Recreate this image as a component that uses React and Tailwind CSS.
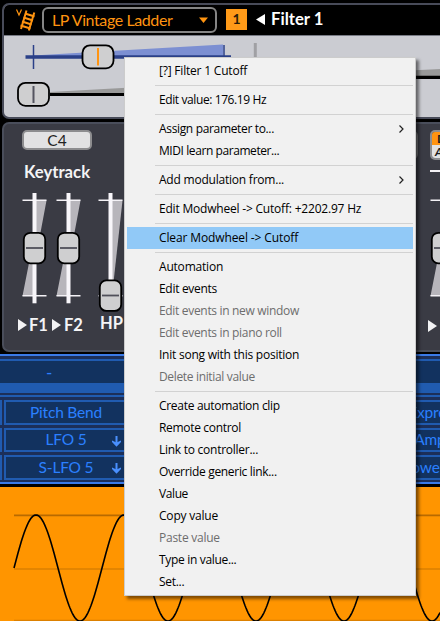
import React from "react";

const MENU = [
  [{ label: "[?] Filter 1 Cutoff", track: "tracking-[-0.2px]" }],
  [{ label: "Edit value: 176.19 Hz", track: "tracking-[-0.4px]" }],
  [
    { label: "Assign parameter to...", kind: "sub", track: "tracking-[-0.34px]" },
    { label: "MIDI learn parameter...", track: "tracking-[-0.42px]" },
  ],
  [{ label: "Add modulation from...", kind: "sub", track: "tracking-[-0.22px]" }],
  [{ label: "Edit Modwheel -> Cutoff: +2202.97 Hz", track: "tracking-[-0.2px]" }],
  [{ label: "Clear Modwheel -> Cutoff", kind: "active", track: "tracking-[-0.12px]" }],
  [
    { label: "Automation", track: "tracking-[-0.2px]" },
    { label: "Edit events", track: "tracking-[-0.3px]" },
    { label: "Edit events in new window", kind: "off", track: "tracking-[-0.32px]" },
    { label: "Edit events in piano roll", kind: "off", track: "tracking-[-0.32px]" },
    { label: "Init song with this position", track: "tracking-[-0.24px]" },
    { label: "Delete initial value", kind: "off", track: "tracking-[-0.34px]" },
  ],
  [
    { label: "Create automation clip", track: "tracking-[-0.3px]" },
    { label: "Remote control", track: "tracking-[-0.32px]" },
    { label: "Link to controller...", track: "tracking-[-0.26px]" },
    { label: "Override generic link...", track: "tracking-[-0.32px]" },
    { label: "Value", track: "tracking-[-0.4px]" },
    { label: "Copy value", track: "tracking-[-0.2px]" },
    { label: "Paste value", kind: "off", track: "tracking-[-0.25px]" },
    { label: "Type in value...", track: "tracking-[-0.32px]" },
    { label: "Set...", track: "tracking-[-0.3px]" },
  ],
];

function MenuItem({ label, kind, track }) {
  return (
    <div
      className={
        "flex h-[22px] items-center justify-between pl-8 pr-[8px] " +
        (kind === "active" ? "bg-[#91c9f7] " : "") +
        (kind === "off" ? "text-[#6d6d6d]" : "text-black")
      }
    >
      <span className={"whitespace-pre " + track}>{label}</span>
      {kind === "sub" && (
        <svg width="7" height="8" viewBox="0 0 7 8">
          <path d="M1.5 0.5L5 4L1.5 7.5" fill="none" stroke="#222" strokeWidth="1.2" />
        </svg>
      )}
    </div>
  );
}

function ContextMenu() {
  return (
    <div className="absolute left-[124px] top-[57px] h-[539px] w-[292px] border border-[#ccc] bg-[#f1f1f1] p-[2px] font-['Open_Sans','Noto_Sans',sans-serif] text-[12px] shadow-[3px_3px_3px_rgba(0,0,0,0.5)]">
      {MENU.map((group, g) => (
        <React.Fragment key={g}>
          {g > 0 && (
            <div className="flex h-[7px] items-center pl-7">
              <div className="h-px w-full bg-[#d2d2d2]" />
            </div>
          )}
          {group.map((item) => (
            <MenuItem key={item.label} {...item} />
          ))}
        </React.Fragment>
      ))}
    </div>
  );
}

function Header() {
  return (
    <div className="flex h-[30px] shrink-0 items-center bg-black">
      <svg width="22" height="26" viewBox="14 5 22 26" className="ml-[10px]" fill="none" stroke="#ff9410">
        <path d="M16.5 7.5L19 13L21.5 7.5" strokeWidth="1.2" />
        <path d="M26.500 8.5L21 27M34.300 10.5L28.800 28.500" strokeWidth="2" />
        <path d="M25 11.500L34.500 14.500M23.500 15.500L33 18.500M22 19.500L31.500 22.500M20.500 23.500L30.500 26.500" strokeWidth="2" />
      </svg>
      <div className="ml-[6px] flex h-[26px] w-[175px] items-center justify-between rounded-[6px] border-2 border-[#858585] pl-[8px] pr-[7px] text-[#ff9410]">
        <span className="whitespace-nowrap text-[16px] leading-none tracking-[-0.4px]">LP Vintage Ladder</span>
        <svg width="9" height="6" viewBox="0 0 9 6">
          <path d="M0 0.500H9L4.500 6Z" fill="#ff9410" />
        </svg>
      </div>
      <div className="mb-[2px] ml-[9px] flex h-[21px] w-[21px] items-center justify-center bg-[#ff9a18] text-[14px] font-bold leading-none text-[#2a1c08]">1</div>
      <svg width="9" height="11" viewBox="0 0 9 11" className="mb-[1px] ml-[9px]">
        <path d="M9 0V11L0 5.500Z" fill="#fff" />
      </svg>
      <span className="mb-[2px] ml-[6px] text-[16.7px] font-bold leading-none text-white">Filter 1</span>
    </div>
  );
}

function FilterSliders() {
  return (
    <svg width="436" height="81" viewBox="4 36 436 81" className="block shrink-0">
      <path d="M33 55.500L223 44.500V57H33Z" fill="#7c8fd2" />
      <path d="M25.500 57H231" stroke="#2b4088" strokeWidth="3.500" />
      <path d="M33.500 45V69M224 45V57" stroke="#2b4088" strokeWidth="1.500" />
      <path d="M255.300 43V60" stroke="#a0a0a4" strokeWidth="3" />
      <rect x="82.500" y="45.300" width="31" height="23" rx="7.500" fill="#cfcfd0" stroke="#000" strokeWidth="1.800" />
      <path d="M98 48V65.500" stroke="#ff9410" strokeWidth="2" />
      <path d="M50 92L230 82V94H50Z" fill="#999" />
      <path d="M50 94.500H231" stroke="#000" strokeWidth="3.200" />
      <rect x="18" y="82.800" width="31" height="23" rx="7.500" fill="#cfcfd0" stroke="#000" strokeWidth="1.800" />
      <path d="M33.500 86V103" stroke="#555560" strokeWidth="2" />
      <path d="M300 76L440 69V77H300Z" fill="#999" />
      <path d="M300 77.300H440" stroke="#000" strokeWidth="3.200" />
    </svg>
  );
}

function Fader({ low = false }) {
  const y = low ? 87.4 : 39.8;
  return (
    <svg width="25" height="120" viewBox="0 0 25 120" className="block shrink-0">
      {low ? (
        <path d="M13 7.500H24.500L14 103H12.500Z" fill="#b7b5bb" />
      ) : (
        <path d="M12.500 7.500H24.500L13 69V103H0.500L12.500 42Z" fill="#b7b5bb" />
      )}
      <path d="M0.500 7.300H24.500M0.500 102.700H24.500" stroke="#f4f2f6" strokeWidth="1.600" />
      <path d="M12.500 0V110.300" stroke="#f8f6fa" strokeWidth="4" />
      <rect x="1.800" y={y} width="21.400" height="30.500" rx="6.500" fill="#cfcfd0" stroke="#000" strokeWidth="1.800" />
      <path d={low ? "M4 102.500H21" : "M4 55H21"} stroke="#50505a" strokeWidth="1.800" />
    </svg>
  );
}

function Play() {
  return (
    <svg width="9" height="12" viewBox="0 0 9 12">
      <path d="M0 0L9 6L0 12Z" fill="#f2f2f4" />
    </svg>
  );
}

function Keytrack() {
  return (
    <div className="flex h-[230px] w-[470px] shrink-0 justify-between rounded-[7px] border-2 border-[#4a4e5b] bg-[#3a3b44]">
      <div className="flex flex-col font-bold text-[#f4f4f6]">
        <div className="ml-[18px] mt-[6px] flex h-[20px] w-[70px] items-center justify-center rounded-[5px] border-2 border-[#8d8d8f] bg-[#e2e2e3] pt-px text-[15.5px] font-normal leading-none text-[#222]">C4</div>
        <div className="ml-[20px] mt-[12px] h-[20px] text-[16.700px] leading-[20px]">Keytrack</div>
        <div className="ml-[17.5px] mt-[11px] flex">
          <Fader />
          <div className="ml-[9px]"><Fader /></div>
          <div className="ml-[17.5px]"><Fader low /></div>
        </div>
        <div className="ml-[14px] flex h-[24px] items-center text-[16.500px] leading-none">
          <Play />
          <span className="ml-[2px] w-[23px]">F1</span>
          <Play />
          <span className="ml-[3px] w-[22px]">F2</span>
          <span className="mb-[4px] ml-[14px]">HP</span>
        </div>
      </div>
      <div className="flex">
        <div className="mr-[12px] mt-[6px] h-[30px] w-[80px] rounded-[6px] border-2 border-[#77777b] bg-[#4a4b53]" />
        <div className="mr-[14px] flex w-[26px] flex-col">
          <div className="mt-[6px] flex h-[30px] flex-col overflow-hidden rounded-[5px] border-2 border-[#8d8d8f] text-[12px] font-bold leading-[13px] text-[#1b1b1b]">
            <span className="h-[13px] bg-[#ff9410] pl-[5px]">D</span>
            <span className="h-[13px] bg-[#e2e2e3] pl-[3px] italic">A</span>
          </div>
          <div className="mt-[10px] h-[2px] shrink-0 bg-[#f4f2f6]" />
          <div className="mt-[21px]"><Fader /></div>
          <div className="-ml-[2px] mt-[7px]"><Play /></div>
        </div>
      </div>
    </div>
  );
}

function ModCell({ label, arrow = false }) {
  return (
    <div className="relative flex h-full w-[124px] shrink-0 items-center justify-center border-2 border-[#205bb0] bg-[#12325f]">
      <span className="whitespace-nowrap text-[15.500px] leading-none tracking-[-0.2px]">{label}</span>
      {arrow && (
        <svg width="9" height="11" viewBox="0 0 9 11" className="absolute right-[5px] top-[6px]">
          <path d="M4.500 0V8" fill="none" stroke="#4a90ff" strokeWidth="2" />
          <path d="M0 4.600L4.500 6.500L9 4.600V6L4.500 10.800L0 6Z" fill="#4a90ff" />
        </svg>
      )}
    </div>
  );
}

const ROWS = [
  ["Pitch Bend", "", "", "Expression"],
  ["LFO 5", "", "", "Amp Env"],
  ["S-LFO 5", "", "", "Power Env 1"],
];

function ModMatrix() {
  return (
    <div className="flex h-[130px] shrink-0 flex-col overflow-hidden border-y-2 border-[#3a7ae8] bg-[#1c2f59] text-[#2b80ff]">
      <div className="mt-[3px] h-[2px] shrink-0 bg-[#205bb0]" />
      <div className="flex h-[22px] shrink-0 items-center bg-[#12325f] pl-[46px] text-[17px] leading-none">-</div>
      <div className="h-[10px] shrink-0 bg-[#205bb0]" />
      <div className="mt-[2px] h-[2px] shrink-0 bg-[#205bb0]" />
      <div className="mt-[3px] flex flex-col gap-[3px]">
        {ROWS.map((row, r) => (
          <div key={r} className="flex h-[24.500px] gap-[2px]">
            <div className="w-[2px] shrink-0 bg-[#205bb0]" />
            {row.map((label, c) => (
              <ModCell key={c} label={label} arrow={r > 0} />
            ))}
          </div>
        ))}
      </div>
    </div>
  );
}

const WAVE = Array.from({ length: 427 }, (_, i) => {
  const x = 14 + i;
  const y = 81 - 53 * Math.sin((2 * Math.PI * i) / 88);
  return `${i ? "L" : "M"}${x} ${y.toFixed(2)}`;
}).join("");

function Scope() {
  return (
    <svg width="440" height="134" viewBox="0 0 440 134" className="block bg-[#ff9500]">
      <path d="M14 28.300H440" stroke="#b86a00" strokeWidth="1.800" />
      <path d="M14 82H440M14 133.500H440" stroke="#dc8000" strokeWidth="1.500" />
      <path d={WAVE} fill="none" stroke="#000" strokeWidth="1.600" />
    </svg>
  );
}

export default function App() {
  return (
    <div className="relative flex h-[621px] w-[440px] flex-col overflow-hidden bg-black font-[Lato,sans-serif]">
      <div className="ml-[2px] mt-[3px] flex h-[116px] w-[470px] shrink-0 flex-col overflow-hidden rounded-[7px] border-2 border-[#484b59] bg-[#cbccd2]">
        <Header />
        <div className="h-px shrink-0 bg-[#777a84]" />
        <FilterSliders />
      </div>
      <div className="ml-[2px] mt-[3px] shrink-0"><Keytrack /></div>
      <div className="mt-[2px] flex flex-col"><ModMatrix /></div>
      <div className="mt-[3px]"><Scope /></div>
      <ContextMenu />
    </div>
  );
}
